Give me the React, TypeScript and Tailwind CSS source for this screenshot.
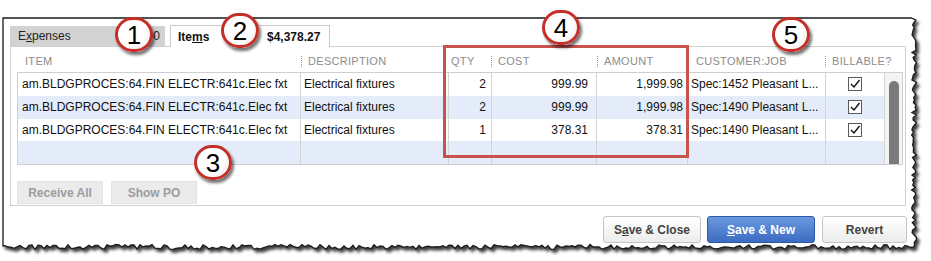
import React from "react";

function rand(seed: number) {
  const x = Math.sin(seed * 12.9898 + 78.233) * 43758.5453;
  return x - Math.floor(x);
}

function framePath() {
  const pts: string[] = [];
  pts.push("M3,18");
  pts.push("L911,18");
  for (let y = 20; y <= 246; y += 2.5) {
    const x = 914 + (rand(y) - 0.5) * 5;
    pts.push(`L${x.toFixed(1)},${y.toFixed(1)}`);
  }
  for (let x = 914; x >= 4; x -= 3) {
    const y = 247 + (rand(x + 500) - 0.5) * 5;
    pts.push(`L${x.toFixed(1)},${y.toFixed(1)}`);
  }
  pts.push("L3,246 Z");
  return pts.join(" ");
}

function Frame() {
  return (
    <svg className="absolute left-0 top-0" width={931} height={261} viewBox="0 0 931 261">
      <defs>
        <filter id="sh" x="-5%" y="-5%" width="110%" height="115%">
          <feDropShadow dx="2.5" dy="3" stdDeviation="1.6" floodColor="#000" floodOpacity="0.75" />
        </filter>
      </defs>
      <path d={framePath()} fill="#fff" stroke="#1a1a1a" strokeWidth="1.3" filter="url(#sh)" />
    </svg>
  );
}

function Circle({ n, x, y }: { n: string; x: number; y: number }) {
  return (
    <div
      className="absolute z-20 w-[38px] h-[35px] rounded-full border-[3px] border-[#c42f28] bg-[radial-gradient(circle_at_40%_35%,#ffffff_55%,#f1dcdc_100%)] shadow-[2px_3px_3px_rgba(0,0,0,0.55)] flex items-center justify-center text-[26px] leading-none text-black font-['Liberation_Sans',Arial,sans-serif]"
      style={{ left: x - 19, top: y - 17 }}
    >
      {n}
    </div>
  );
}

function Check() {
  return (
    <svg width="14" height="14" viewBox="0 0 14 14">
      <rect x="0.5" y="0.5" width="13" height="13" fill="#fff" stroke="#5a5a5a" />
      <path d="M3 7 L6 10 L11.5 3" fill="none" stroke="#111" strokeWidth="1.4" />
    </svg>
  );
}

const cols = [
  { w: "w-[283px]" },
  { w: "w-[148px]" },
  { w: "w-[43px]" },
  { w: "w-[105px]" },
  { w: "w-[91px]" },
  { w: "w-[138px]" },
  { w: "w-[59px]" },
];

const rows = [
  ["am.BLDGPROCES:64.FIN ELECTR:641c.Elec fxt", "Electrical fixtures", "2", "999.99", "1,999.98", "Spec:1452 Pleasant L..."],
  ["am.BLDGPROCES:64.FIN ELECTR:641c.Elec fxt", "Electrical fixtures", "2", "999.99", "1,999.98", "Spec:1490 Pleasant L..."],
  ["am.BLDGPROCES:64.FIN ELECTR:641c.Elec fxt", "Electrical fixtures", "1", "378.31", "378.31", "Spec:1490 Pleasant L..."],
  null,
];

function HeadCell({ w, label, sep }: { w: string; label: string; sep: boolean }) {
  return (
    <div className={`${w} flex items-center shrink-0`}>
      <div className={`w-px h-[11px] border-l border-dotted ${sep ? "border-[#9a9a9a]" : "border-transparent"}`} />
      <span className="ml-[6px] text-[11px] tracking-[0.3px] text-[#8c8c8c]">{label}</span>
    </div>
  );
}

export default function App() {
  return (
    <div className="w-[931px] h-[261px] relative bg-white overflow-hidden font-['Liberation_Sans',Arial,sans-serif] text-[12px] text-[#111]">
      <Frame />
      <div className="relative pl-[10px] pt-[26px] w-[907px]">
        {/* tabs */}
        <div className="flex h-[20px] items-end">
          <div className="w-[155px] h-[20px] bg-[#d2d2d2] flex items-center justify-between pl-[8px] pr-[5px] text-[#222]">
            <span>
              E<u>x</u>penses
            </span>
            <span>$0.00</span>
          </div>
          <div className="ml-[5px] w-[160px] h-[22px] bg-white border border-b-0 border-[#c9c9c9] flex items-center pl-[7px] font-bold relative z-10 -mb-px">
            <span className="w-[89px]">
              Ite<u>m</u>s
            </span>
            <span>$4,378.27</span>
          </div>
        </div>
        {/* panel */}
        <div className="w-[896px] h-[160px] border border-[#d0d0d0] pl-[6px]">
          <div className="flex h-[25px] pl-px items-center pt-[3px]">
            <HeadCell w={cols[0].w} label="ITEM" sep={false} />
            <HeadCell w="w-[143px]" label="DESCRIPTION" sep />
            <HeadCell w="w-[47px]" label="QTY" sep />
            <HeadCell w="w-[106px]" label="COST" sep />
            <HeadCell w="w-[92px]" label="AMOUNT" sep />
            <HeadCell w="w-[136px]" label="CUSTOMER:JOB" sep={false} />
            <HeadCell w="w-[61px]" label="BILLABLE?" sep />
          </div>
          <div className="flex w-[886px] h-[93px] border border-[#cfcfcf]">
            <div className="flex flex-col">
              {rows.map((r, i) => (
                <div key={i} className={`flex h-[23px] ${i % 2 === 1 ? "bg-[#e3ecf8]" : "bg-white"}`}>
                  <div className={`${cols[0].w} border-r border-[#d4d4d4] pl-[4px] flex items-center whitespace-nowrap overflow-hidden`}>{r ? r[0] : ""}</div>
                  <div className={`${cols[1].w} border-r border-[#d4d4d4] pl-[3px] flex items-center`}>{r ? r[1] : ""}</div>
                  <div className={`${cols[2].w} border-r border-[#d4d4d4] pr-[5px] flex items-center justify-end`}>{r ? r[2] : ""}</div>
                  <div className={`${cols[3].w} border-r border-[#d4d4d4] pr-[8px] flex items-center justify-end`}>{r ? r[3] : ""}</div>
                  <div className={`${cols[4].w} border-r border-[#d4d4d4] pr-[4px] flex items-center justify-end`}>{r ? r[4] : ""}</div>
                  <div className={`${cols[5].w} border-r border-[#d4d4d4] pl-[3px] flex items-center whitespace-nowrap`}>{r ? r[5] : ""}</div>
                  <div className={`${cols[6].w} border-r border-[#d4d4d4] flex items-center justify-center`}>{r ? <Check /> : null}</div>
                </div>
              ))}
            </div>
            <div className="w-[17px] bg-[#f4f4f4] flex flex-col items-center overflow-hidden">
              <svg width="10" height="8" viewBox="0 0 10 8" className="mt-[5px]">
                <path d="M5 1 L9 7 L1 7 Z" fill="#5e5e5e" />
              </svg>
              <div className="mt-[3px] w-[10px] h-[90px] rounded-full bg-[#7b7b7b] shrink-0" />
            </div>
          </div>
          <div className="flex gap-[8px] mt-[16px]">
            <div className="w-[86px] h-[23px] bg-[#ebebeb] border border-[#e2e2e2] flex items-center justify-center font-bold text-[#9c9c9c]">
              Receive All
            </div>
            <div className="w-[86px] h-[23px] bg-[#ebebeb] border border-[#e2e2e2] flex items-center justify-center font-bold text-[#9c9c9c]">
              Show PO
            </div>
          </div>
        </div>
        {/* bottom buttons */}
        <div className="flex justify-end mt-[10px]">
          <div className="w-[98px] h-[27px] rounded-[3px] border border-[#c4c4c4] bg-[linear-gradient(#ffffff,#ececec)] flex items-center justify-center font-bold text-[#444]">
            S<u>a</u>ve &amp; Close
          </div>
          <div className="ml-[6px] w-[108px] h-[27px] rounded-[3px] border border-[#2c58a6] bg-[linear-gradient(#6a98de,#3c6cc3)] flex items-center justify-center font-bold text-white">
            <u>S</u>ave &amp; New
          </div>
          <div className="ml-[7px] w-[85px] h-[27px] rounded-[3px] border border-[#c4c4c4] bg-[linear-gradient(#ffffff,#ececec)] flex items-center justify-center font-bold text-[#444]">
            Revert
          </div>
        </div>
      </div>
      {/* annotations */}
      <div className="absolute z-20 left-[443px] top-[45px] w-[246px] h-[113px] border-[3px] border-[#c8524c]" />
      <Circle n="1" x={134} y={34} />
      <Circle n="2" x={240} y={30} />
      <Circle n="3" x={213} y={162} />
      <Circle n="4" x={561} y={27} />
      <Circle n="5" x={791} y={34} />
    </div>
  );
}
